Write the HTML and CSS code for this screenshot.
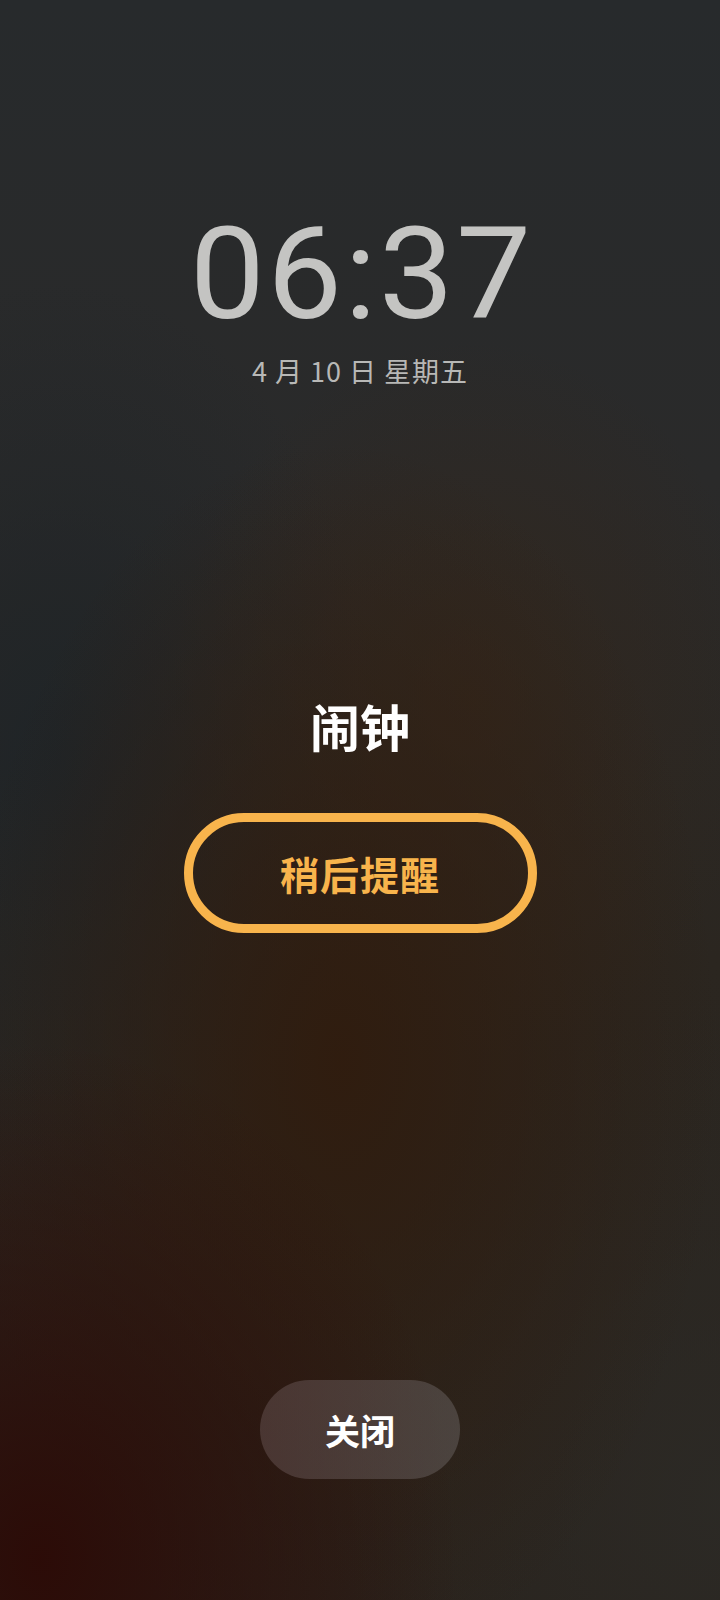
FILE: index.html
```html
<!DOCTYPE html>
<html lang="zh-CN">
<head>
<meta charset="utf-8">
<link rel="stylesheet" href="styles.css">
</head>
<body>
<main class="screen">
  <section class="clock">
    <div class="time">06:37</div>
    <div class="date">4 月 10 日 星期五</div>
  </section>
  <section class="alarm">
    <h1 class="title">闹钟</h1>
    <button class="snooze">稍后提醒</button>
  </section>
  <section class="bottom">
    <button class="dismiss">关闭</button>
  </section>
</main>
</body>
</html>
```

FILE: styles.css
```css
html, body {
  margin: 0;
  padding: 0;
}
body {
  width: 720px;
  height: 1600px;
  overflow: hidden;
  font-family: "Noto Sans CJK SC", "Noto Sans", sans-serif;
  background-color: #27272a;
  background-image:
    radial-gradient(ellipse 420px 520px at 40px 1560px, rgba(44, 10, 6, 0.95), rgba(44, 10, 6, 0) 100%),
    radial-gradient(ellipse 380px 620px at 340px 1060px, rgba(48, 28, 14, 0.95), rgba(48, 28, 14, 0) 100%),
    radial-gradient(ellipse 300px 360px at 470px 700px, rgba(52, 38, 26, 0.7), rgba(52, 38, 26, 0) 100%),
    radial-gradient(ellipse 320px 480px at 60px 760px, rgba(30, 36, 40, 0.9), rgba(30, 36, 40, 0) 100%),
    radial-gradient(ellipse 380px 500px at 720px 1500px, rgba(44, 42, 38, 0.9), rgba(44, 42, 38, 0) 100%),
    linear-gradient(180deg, #272a2c 0%, #2a2a2a 30%, #2b2620 60%, #29231d 100%);
}
.screen {
  height: 1600px;
  display: flex;
  flex-direction: column;
  align-items: center;
}
.clock {
  display: flex;
  flex-direction: column;
  align-items: center;
  padding-top: 210px;
}
.time {
  font-family: "Roboto", sans-serif;
  font-weight: 400;
  font-size: 128px;
  line-height: 128px;
  color: #c4c4c2;
  letter-spacing: 2px;
  padding-left: 2px;
  transform: scaleX(1.045);
}
.date {
  margin-top: 13px;
  font-size: 27px;
  line-height: 40px;
  color: #b8b8b6;
  letter-spacing: 1px;
}
.alarm {
  display: flex;
  flex-direction: column;
  align-items: center;
  margin-top: 302px;
}
.title {
  margin: 0;
  font-size: 50px;
  font-weight: 700;
  line-height: 64px;
  color: #ffffff;
}
.snooze {
  margin-top: 56px;
  width: 353px;
  height: 120px;
  box-sizing: border-box;
  border: 9px solid #f8b44c;
  border-radius: 60px;
  background: transparent;
  color: #f8b44c;
  font-family: "Noto Sans CJK SC", sans-serif;
  font-size: 39px;
  font-weight: 700;
  letter-spacing: 1px;
  padding: 0;
}
.bottom {
  margin-top: auto;
  padding-bottom: 121px;
}
.dismiss {
  width: 200px;
  height: 99px;
  border: none;
  border-radius: 50px;
  background: linear-gradient(90deg, rgba(92, 72, 70, 0.62), rgba(100, 94, 92, 0.55));
  color: #ffffff;
  font-family: "Noto Sans CJK SC", sans-serif;
  font-size: 35px;
  font-weight: 700;
  padding: 0;
}
```
